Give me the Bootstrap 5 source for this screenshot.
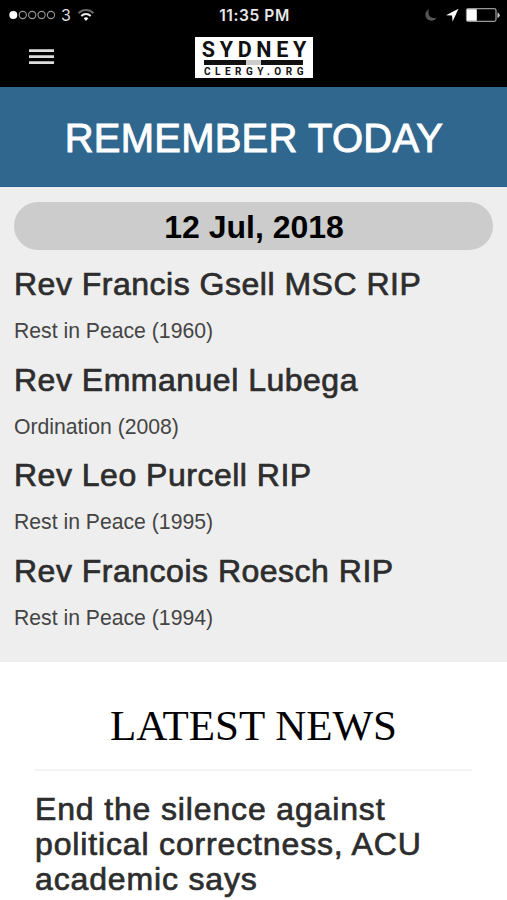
<!DOCTYPE html>
<html lang="en">
<head>
<meta charset="utf-8">
<meta name="viewport" content="width=device-width, initial-scale=1">
<title>Sydney Clergy</title>
<link href="https://cdn.jsdelivr.net/npm/bootstrap@5.3.0/dist/css/bootstrap.min.css" rel="stylesheet">
<style>
body{font-family:"Liberation Sans",Arial,sans-serif;height:900px;overflow:hidden;color:#2d2d2d}
.status{height:30px;line-height:30px}
.status .col{height:30px}
.topbar{height:57px}
.clock{font-family:Inter,sans-serif;font-weight:600;font-size:15.5px;line-height:31px;letter-spacing:.6px;color:#e8e8e8;padding-left:9px}
.carrier{font-family:Inter,sans-serif;font-size:16px;color:#ddd;margin-left:5px}
.wifi{margin-left:6px}
.indicators{padding-right:7px}
.logo{width:118px;height:41px;margin-top:7px;padding-top:4px;color:#111;font-family:Roboto,sans-serif;font-weight:700}
.logo-top{font-size:21.5px;line-height:17px;letter-spacing:4.7px;margin-right:-5.7px}
.logo-bar{width:99px;height:5px;margin-top:2px;background:linear-gradient(90deg,#111 42%,#ccc 42% 58%,#111 58%)}
.logo-sub{font-size:10px;line-height:9px;letter-spacing:4.5px;margin-right:-5px;margin-top:2px;white-space:nowrap}
.banner{height:100px;background:#30678e;border-bottom:1px solid #28618f}
.banner h1{font-size:40px;line-height:48px;-webkit-text-stroke:.9px #fff;letter-spacing:.2px;padding:2px 0 0 1px}
.today{height:475px;background:#eee;padding:15px 14px 0}
.date{height:48px;background:#ccc;font-size:32px;line-height:50px;color:#000;padding-left:1px}
.name{font-size:32px;line-height:36px;-webkit-text-stroke:.7px #2d2d2d;letter-spacing:.5px}
.event{font-size:21.2px;line-height:28px;color:#444;margin-top:15px}
.entry{height:95.7px;padding-top:16px}
.news{padding:38px 35px 0}
.news h2{font-family:"Liberation Serif","Times New Roman",serif;font-size:43px;line-height:50px;color:#000;padding-top:1px}
.rule{height:2px;background:#f3f3f3;margin-top:18px}
.headline{font-size:32px;line-height:35.2px;margin-top:21px;-webkit-text-stroke:.7px #2d2d2d;letter-spacing:.85px;white-space:nowrap}
</style>
</head>
<body class="bg-white">
<header class="bg-black text-white">
  <div class="status row g-0">
    <div class="col d-flex align-items-center">
      <svg class="ms-2" width="48" height="12" viewBox="0 0 48 12"><circle cx="5.3" cy="6" r="4" fill="#fff"/><g fill="none" stroke="#999" stroke-width="1.1"><circle cx="14.8" cy="6" r="3.6"/><circle cx="24.2" cy="6" r="3.6"/><circle cx="33.6" cy="6" r="3.6"/><circle cx="43" cy="6" r="3.6"/></g></svg>
      <span class="carrier">3</span>
      <svg class="wifi" width="18" height="14" viewBox="0 0 18 14" fill="none"><path d="M1.5 5.2a10.6 10.6 0 0 1 15 0" stroke="#666" stroke-width="2"/><path d="M4.3 8a6.7 6.7 0 0 1 9.4 0" stroke="#eee" stroke-width="2"/><path d="M6.7 10.3a3.3 3.3 0 0 1 4.6 0L9 13z" fill="#fff"/></svg>
    </div>
    <div class="col text-center clock">11:35 PM</div>
    <div class="col indicators d-flex align-items-center justify-content-end">
      <svg width="76" height="18" viewBox="0 0 76 18"><path d="M5 3.2C.2 5 .2 12 5 14.2c3 1.3 6.5-.1 7.5-2.8C6.5 13.7 3 8.5 5 3.2z" fill="#555"/><path d="M34.500 2.800L22 9.200l6 .4.600 5.800z" fill="#fff"/><rect x="42.500" y="2.700" width="29.500" height="12.600" rx="1.800" fill="none" stroke="#999" stroke-width="1.300"/><path d="M43 3.200h9.800v11.600H43z" fill="#fff"/><path d="M73.500 6.200q4.500 3 0 6z" fill="#ccc"/></svg>
    </div>
  </div>
  <div class="topbar row g-0">
    <div class="col"><svg width="60" height="40" viewBox="0 0 60 40" fill="#ddd"><path d="M29 19.300h25v2.700H29zM29 25.300h25V28H29zM29 31.300h25V34H29z"/></svg></div>
    <div class="col-auto"><div class="logo bg-white d-flex flex-column align-items-center"><div class="logo-top">SYDNEY</div><div class="logo-bar"></div><div class="logo-sub">CLERGY.ORG</div></div></div>
    <div class="col"></div>
  </div>
</header>
<section class="banner d-flex align-items-center justify-content-center text-white"><h1 class="m-0 fw-normal">REMEMBER TODAY</h1></section>
<section class="today">
  <div class="date rounded-pill text-center fw-bold">12 Jul, 2018</div>
  <div class="entry"><h3 class="name m-0 fw-normal">Rev Francis Gsell MSC RIP</h3><p class="event mb-0">Rest in Peace (1960)</p></div>
  <div class="entry"><h3 class="name m-0 fw-normal">Rev Emmanuel Lubega</h3><p class="event mb-0">Ordination (2008)</p></div>
  <div class="entry"><h3 class="name m-0 fw-normal">Rev Leo Purcell RIP</h3><p class="event mb-0">Rest in Peace (1995)</p></div>
  <div class="entry"><h3 class="name m-0 fw-normal">Rev Francois Roesch RIP</h3><p class="event mb-0">Rest in Peace (1994)</p></div>
</section>
<section class="news">
  <h2 class="m-0 fw-normal text-center">LATEST NEWS</h2>
  <div class="rule"></div>
  <h3 class="headline mb-0 fw-normal">End the silence against<br>political correctness, ACU<br>academic says</h3>
</section>
<script src="https://cdn.jsdelivr.net/npm/bootstrap@5.3.0/dist/js/bootstrap.bundle.min.js"></script>
</body>
</html>
